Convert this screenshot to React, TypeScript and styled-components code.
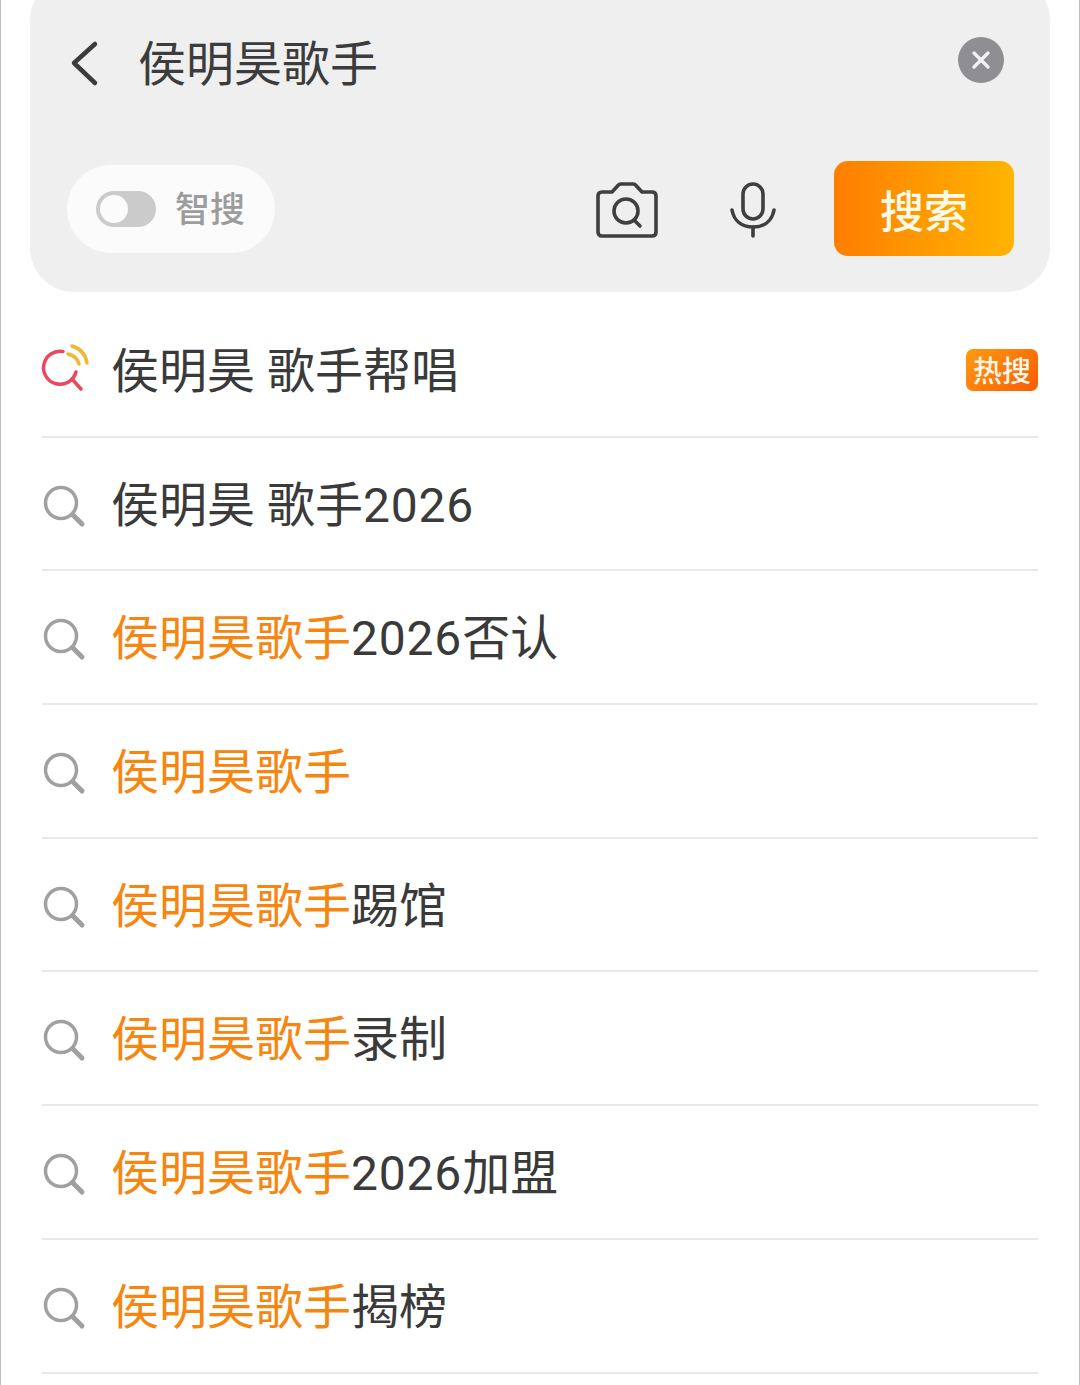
import React from 'react';
import styled, { createGlobalStyle } from 'styled-components';

const GlobalStyle = createGlobalStyle`
  html, body {
    margin: 0;
    padding: 0;
    background: #fff;
    overflow: hidden;
  }
`;

const Page = styled.div`
  box-sizing: border-box;
  width: 1080px;
  height: 1385px;
  overflow: hidden;
  padding: 0 29px;
  border-left: 1px solid #bdbdbd;
  border-right: 1px solid #bdbdbd;
  font-family: Roboto, 'Noto Sans CJK SC', 'Noto Sans', sans-serif;
`;

const SearchPanel = styled.header`
  box-sizing: border-box;
  height: 316px;
  margin-top: -24px;
  padding: 52px 36px 36px 36px;
  display: flex;
  flex-direction: column;
  justify-content: space-between;
  background: #efefef;
  border-radius: 44px;
`;

const QueryRow = styled.div`
  display: flex;
  align-items: center;
  height: 70px;
`;

const BackButton = styled.svg`
  width: 36px;
  height: 52px;
  margin-left: 2px;
  flex: none;
`;

const QueryText = styled.div`
  flex: 1;
  margin-left: 34px;
  margin-top: 3px;
  font-size: 48px;
  line-height: 70px;
  color: #3c3c3c;
`;

const ClearButton = styled.div`
  width: 46px;
  height: 46px;
  margin-top: -6px;
  margin-right: 10px;
  border-radius: 50%;
  background: #8e8e93;
  display: flex;
  align-items: center;
  justify-content: center;
`;

const ToolRow = styled.div`
  display: flex;
  align-items: center;
`;

const SmartPill = styled.div`
  box-sizing: border-box;
  width: 208px;
  height: 88px;
  margin-left: 1px;
  padding-left: 29px;
  display: flex;
  align-items: center;
  background: #fbfbfb;
  border-radius: 44px;
`;

const Toggle = styled.div`
  box-sizing: border-box;
  width: 60px;
  height: 36px;
  padding: 4px;
  border-radius: 18px;
  background: #cbcbcb;
`;

const ToggleKnob = styled.div`
  width: 28px;
  height: 28px;
  border-radius: 50%;
  background: #fbfbfb;
`;

const SmartLabel = styled.span`
  margin-left: 19px;
  margin-top: 4px;
  font-size: 35px;
  font-weight: 500;
  line-height: 1;
  color: #9c9c9c;
`;

const ToolIcons = styled.div`
  flex: 1;
  display: flex;
  justify-content: flex-end;
  align-items: center;
  gap: 72px;
  margin-top: 3px;
  margin-right: 58px;
`;

const SearchButton = styled.div`
  width: 180px;
  height: 95px;
  border-radius: 14px;
  background: linear-gradient(90deg, #ff7e00 0%, #ffb400 100%);
  display: flex;
  align-items: center;
  justify-content: center;
  font-size: 44px;
  font-weight: 500;
  color: #fffbe8;
`;

const SuggestionList = styled.ul`
  list-style: none;
  margin: 12px 0 0;
  padding: 0 12px;
`;

const SuggestionRow = styled.li`
  box-sizing: border-box;
  height: 133.7px;
  display: flex;
  align-items: center;
  border-bottom: 2px solid #e8e8e8;
`;

const RowIcon = styled.svg`
  width: 46px;
  height: 50px;
  flex: none;
  overflow: visible;
`;

const RowText = styled.span`
  flex: 1;
  margin-left: 23px;
  margin-top: 4px;
  font-size: 48px;
  line-height: 70px;
  color: #3a3a3a;
  white-space: pre;
`;

const Match = styled.span`
  color: #f6860f;
`;

const Digits = styled.span`
  letter-spacing: 0.8px;
`;

const HotBadge = styled.span`
  box-sizing: border-box;
  width: 72px;
  height: 42px;
  padding-top: 5px;
  border-radius: 7px;
  background: linear-gradient(135deg, #ff9a10 0%, #f85c06 100%);
  display: flex;
  align-items: center;
  justify-content: center;
  font-size: 29px;
  font-weight: 500;
  line-height: 1;
  color: #fff6e6;
`;

const SearchGlyph = () => (
  <RowIcon viewBox="0 0 46 50" fill="none">
    <circle cx="19" cy="24" r="15.5" stroke="#a0a0a0" strokeWidth="3.5" />
    <path d="M31 36 L40 45" stroke="#a0a0a0" strokeWidth="5" strokeLinecap="round" />
  </RowIcon>
);

const HotGlyph = () => (
  <RowIcon viewBox="0 0 46 50" fill="none">
    <path
      d="M21 6.5 A16.5 16.5 0 1 0 34 27"
      stroke="#e8495f"
      strokeWidth="3.5"
      strokeLinecap="round"
    />
    <path d="M30 34 L39 44" stroke="#e8495f" strokeWidth="3.5" strokeLinecap="round" />
    <path d="M26 9 Q35 11 37 19" stroke="#f2b632" strokeWidth="3.5" strokeLinecap="round" />
    <path d="M30 1 Q43 5 45 18" stroke="#f2b632" strokeWidth="3.5" strokeLinecap="round" />
  </RowIcon>
);

type Suggestion = {
  match?: string;
  plain?: string;
  digits?: string;
  tail?: string;
  hot?: boolean;
};

const rows: Suggestion[] = [
  { plain: '侯明昊 歌手帮唱', hot: true },
  { plain: '侯明昊 歌手', digits: '2026' },
  { match: '侯明昊歌手', digits: '2026', tail: '否认' },
  { match: '侯明昊歌手' },
  { match: '侯明昊歌手', tail: '踢馆' },
  { match: '侯明昊歌手', tail: '录制' },
  { match: '侯明昊歌手', digits: '2026', tail: '加盟' },
  { match: '侯明昊歌手', tail: '揭榜' },
];

export default function App() {
  return (
    <Page>
      <GlobalStyle />
      <SearchPanel>
        <QueryRow>
          <BackButton viewBox="0 0 36 52" fill="none">
            <path
              d="M27 7 L6 26 L27 46"
              stroke="#3c3c3c"
              strokeWidth="4.5"
              strokeLinecap="round"
              strokeLinejoin="round"
            />
          </BackButton>
          <QueryText>侯明昊歌手</QueryText>
          <ClearButton>
            <svg width="20" height="20" viewBox="0 0 20 20" fill="none">
              <path d="M3 3 L17 17 M17 3 L3 17" stroke="#f2f2f2" strokeWidth="3.4" strokeLinecap="round" />
            </svg>
          </ClearButton>
        </QueryRow>
        <ToolRow>
          <SmartPill>
            <Toggle>
              <ToggleKnob />
            </Toggle>
            <SmartLabel>智搜</SmartLabel>
          </SmartPill>
          <ToolIcons>
            <svg width="62" height="56" viewBox="0 0 62 56" fill="none">
              <path
                d="M6 10 H16 L22 3.5 Q23 2 25 2 H37 Q39 2 40 3.5 L46 10 H56 Q60 10 60 14 V50 Q60 54 56 54 H6 Q2 54 2 50 V14 Q2 10 6 10 Z"
                stroke="#3f3f3f"
                strokeWidth="3.6"
                strokeLinejoin="round"
              />
              <circle cx="30" cy="29" r="12" stroke="#3f3f3f" strokeWidth="3.6" />
              <path d="M38 38 L44 44" stroke="#3f3f3f" strokeWidth="3.6" strokeLinecap="round" />
            </svg>
            <svg width="46" height="56" viewBox="0 0 46 56" fill="none">
              <rect x="13" y="2" width="20" height="35" rx="10" stroke="#3f3f3f" strokeWidth="3.6" />
              <path d="M2 28 C4 39 12 45 23 45 C34 45 42 39 44 28" stroke="#3f3f3f" strokeWidth="3.6" strokeLinecap="round" />
              <path d="M23 45 V54" stroke="#3f3f3f" strokeWidth="3.6" strokeLinecap="round" />
            </svg>
          </ToolIcons>
          <SearchButton>搜索</SearchButton>
        </ToolRow>
      </SearchPanel>
      <SuggestionList>
        {rows.map((row, index) => (
          <SuggestionRow key={index}>
            {row.hot ? <HotGlyph /> : <SearchGlyph />}
            <RowText>
              {row.match && <Match>{row.match}</Match>}
              {row.plain}
              {row.digits && <Digits>{row.digits}</Digits>}
              {row.tail}
            </RowText>
            {row.hot && <HotBadge>热搜</HotBadge>}
          </SuggestionRow>
        ))}
      </SuggestionList>
    </Page>
  );
}
